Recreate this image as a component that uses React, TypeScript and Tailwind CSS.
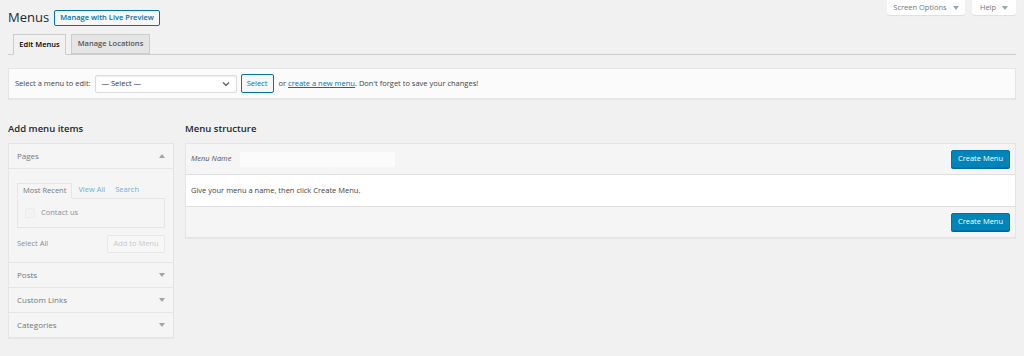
import React from "react";

const font = { fontFamily: '"Open Sans", "Noto Sans", sans-serif' };

function Caret({ up = false }: { up?: boolean }) {
  return (
    <svg width="6" height="4" viewBox="0 0 6 4" className={up ? "rotate-180" : ""}>
      <path d="M0 0h6L3 4z" fill="#a0a5aa" />
    </svg>
  );
}

const sections = ["Posts", "Custom Links", "Categories"];

export default function App() {
  return (
    <div className="w-[1024px] h-[356px] bg-[#f1f1f1] text-[#444] overflow-hidden relative" style={font}>
      {/* Screen meta links */}
      <div className="absolute top-0 right-[8px] flex gap-[7px]">
        <div className="h-[15px] w-[78px] bg-white rounded-b-[3px] shadow-[0_1px_1px_rgba(0,0,0,0.08)] flex items-center justify-center gap-[6px] text-[7.5px] text-[#72777c]">
          Screen Options <Caret />
        </div>
        <div className="h-[15px] w-[44px] bg-white rounded-b-[3px] shadow-[0_1px_1px_rgba(0,0,0,0.08)] flex items-center justify-center gap-[6px] text-[7.5px] text-[#72777c]">
          Help <Caret />
        </div>
      </div>

      <div className="px-[8px] pt-[9px]">
        {/* Title */}
        <div className="flex items-center gap-[5px] h-[17px]">
          <h1 className="text-[13px] text-[#23282d] leading-none">Menus</h1>
          <span className="h-[16px] px-[5px] border border-[#0073aa] rounded-[2px] bg-[#f7f7f7] text-[#0073aa] text-[7.5px] font-semibold flex items-center">
            Manage with Live Preview
          </span>
        </div>

        {/* Tabs */}
        <div className="mt-[8px] flex items-end gap-[5px] pl-[5px] border-b border-[#ccc] h-[21px]">
          <div className="h-[21px] w-[53px] justify-center border border-[#ccc] border-b-[#f1f1f1] bg-[#f1f1f1] text-[7.5px] font-semibold text-[#000] flex items-center -mb-px">
            Edit Menus
          </div>
          <div className="h-[20px] w-[79px] justify-center border border-[#ccc] bg-[#e5e5e5] text-[7.5px] font-semibold text-[#555] flex items-center">
            Manage Locations
          </div>
        </div>

        {/* Select menu bar */}
        <div className="mt-[13px] h-[31px] bg-[#fbfbfb] border border-[#e5e5e5] shadow-[0_1px_1px_rgba(0,0,0,0.04)] flex items-center px-[6px] text-[7.5px] text-[#444]">
          <span>Select a menu to edit:</span>
          <div className="ml-[4px] w-[142px] h-[18px] bg-white border border-[#ddd] rounded-[2px] flex items-center justify-between px-[6px] shadow-[inset_0_1px_2px_rgba(0,0,0,0.07)]">
            <span className="text-[#32373c]">— Select —</span>
            <svg width="8" height="6" viewBox="0 0 8 6">
              <path d="M1 1.5l3 3 3-3" stroke="#555" strokeWidth="1.2" fill="none" />
            </svg>
          </div>
          <span className="ml-[4px] h-[19px] w-[33px] justify-center border border-[#0073aa] rounded-[2px] bg-[#f7f7f7] text-[#0073aa] flex items-center">
            Select
          </span>
          <span className="ml-[5px]">
            or <span className="text-[#0073aa] underline">create a new menu</span>. Don't forget to save your changes!
          </span>
        </div>

        {/* Columns */}
        <div className="mt-[22px] flex gap-[11px]">
          {/* Left */}
          <div className="w-[166px]">
            <h2 className="text-[9.5px] font-semibold text-[#23282d] h-[15px] leading-[15px]">Add menu items</h2>
            <div className="mt-[7px] border border-[#e5e5e5] bg-[#f5f5f5] shadow-[0_1px_1px_rgba(0,0,0,0.04)]">
              <div className="h-[25px] px-[8px] flex items-center justify-between border-b border-[#e5e5e5] text-[8px] text-[#72777c]">
                Pages <Caret up />
              </div>
              <div className="px-[8px] pt-[13px] pb-[9px]">
                <div className="flex text-[7.5px] h-[16px] items-end">
                  <span className="h-[16px] px-[5px] border border-[#e5e5e5] border-b-[#f5f5f5] flex items-center text-[#72777c] -mb-px relative">Most Recent</span>
                  <span className="px-[6px] text-[#72aed1] h-[16px] flex items-center">View All</span>
                  <span className="px-[4px] text-[#72aed1] h-[16px] flex items-center">Search</span>
                </div>
                <div className="h-[30px] border border-[#e5e5e5] flex items-center px-[7px] gap-[6px] text-[7.5px] text-[#8a8f94]">
                  <span className="w-[10px] h-[10px] rounded-[2px] border border-[#ececec] bg-[#f3f3f3]" />
                  Contact us
                </div>
                <div className="mt-[7px] flex items-center justify-between">
                  <span className="text-[7.5px] text-[#8a8f94]">Select All</span>
                  <span className="h-[18px] w-[58px] border border-[#e8e8e8] rounded-[2px] bg-[#f7f7f7] text-[7.5px] text-[#c8c8c8] flex items-center justify-center">
                    Add to Menu
                  </span>
                </div>
              </div>
              {sections.map((s) => (
                <div key={s} className="h-[25px] px-[8px] flex items-center justify-between border-t border-[#e5e5e5] text-[8px] text-[#72777c]">
                  {s} <Caret />
                </div>
              ))}
            </div>
          </div>

          {/* Right */}
          <div className="flex-1">
            <h2 className="text-[9.5px] font-semibold text-[#23282d] h-[15px] leading-[15px]">Menu structure</h2>
            <div className="mt-[7px] border border-[#e5e5e5] shadow-[0_1px_1px_rgba(0,0,0,0.04)]">
              <div className="h-[31px] bg-[#f5f5f5] border-b border-[#dfdfdf] flex items-center px-[5px]">
                <span className="text-[7.5px] italic text-[#555] w-[48px]">Menu Name</span>
                <span className="w-[157px] h-[17px] bg-[#fbfbfb] border border-[#f5f5f5]" />
                <span className="ml-auto h-[18px] w-[59px] justify-center bg-[#0085ba] border border-[#0073aa] rounded-[2px] text-white text-[7.5px] flex items-center shadow-[0_1px_0_#006799]">
                  Create Menu
                </span>
              </div>
              <div className="h-[31px] bg-white px-[5px] flex items-center text-[7.5px] text-[#444]">
                Give your menu a name, then click Create Menu.
              </div>
              <div className="h-[31px] bg-[#f5f5f5] border-t border-[#dfdfdf] flex items-center justify-end px-[5px]">
                <span className="h-[18px] w-[59px] justify-center bg-[#0085ba] border border-[#0073aa] rounded-[2px] text-white text-[7.5px] flex items-center shadow-[0_1px_0_#006799]">
                  Create Menu
                </span>
              </div>
            </div>
          </div>
        </div>
      </div>
    </div>
  );
}
